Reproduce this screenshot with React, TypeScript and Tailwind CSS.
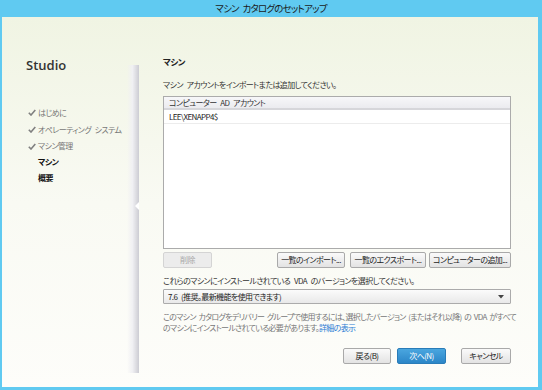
import React from "react";

const jp = "font-['Noto_Sans_CJK_JP','Noto_Sans',sans-serif] [font-feature-settings:'palt'] [word-spacing:2.5px]";

function Btn({ children, className = "", disabled = false }: { children: React.ReactNode; className?: string; disabled?: boolean }) {
  return (
    <div
      className={
        "flex items-center justify-center h-[16px] rounded-[2px] border text-[8px] tracking-[-0.6px] whitespace-nowrap leading-none " +
        (disabled
          ? "border-[#d4d4d4] bg-[#ececec] text-[#a8a8a8] "
          : "border-[#a9a9a9] bg-gradient-to-b from-[#fafafa] to-[#e3e3e3] text-[#222] ") +
        className
      }
    >
      {children}
    </div>
  );
}

function Check() {
  return (
    <svg width="8" height="7" viewBox="0 0 8 7" className="mr-[2px]">
      <path d="M0.8 3.8 L3 6 L7.3 1" fill="none" stroke="#808080" strokeWidth="1.6" />
    </svg>
  );
}

export default function App() {
  return (
    <div className={"w-[542px] h-[390px] bg-[#60caf1] flex flex-col " + jp}>
      <div className="h-[17px] flex items-center justify-center text-[9.5px] tracking-[-0.8px] text-[#1a1a1a] leading-none">
        マシン カタログのセットアップ
      </div>
      <div className="flex-1 ml-[2px] mr-[4px] mb-[3px] flex bg-gradient-to-b from-[#f0f4e3] via-[#f9faf3] to-[#fdfdfa]">
        {/* sidebar */}
        <div className="w-[137px] shrink-0 flex flex-col relative">
          <div className="mt-[40px] ml-[24px] h-[16px] flex items-center font-['Open_Sans',sans-serif] font-semibold text-[13px] text-[#333] leading-none">
            Studio
          </div>
          <div className="mt-[31px] flex flex-col text-[8px] tracking-[-0.6px] leading-none">
            <div className="h-[17px] flex items-center pl-[26px] text-[#777]"><Check />はじめに</div>
            <div className="h-[17px] flex items-center pl-[26px] text-[#777]"><Check />オペレーティング システム</div>
            <div className="h-[16px] flex items-center pl-[26px] text-[#777]"><Check />マシン管理</div>
            <div className="h-[16px] flex items-center pl-[36px] text-[#111] font-bold">マシン</div>
            <div className="h-[16px] flex items-center pl-[36px] text-[#111] font-bold">概要</div>
          </div>
          <div className="absolute right-0 top-[48px] bottom-[14px] w-[12px] bg-gradient-to-r from-transparent via-[#f0f0f3] to-[#d2d2d8] border-r border-[#cfcfd6]">
            <div className="absolute right-[-1px] top-[137px] w-0 h-0 border-y-[4px] border-y-transparent border-r-[4px] border-r-white" />
          </div>
        </div>
        {/* content */}
        <div className="flex-1 min-w-0 flex flex-col pl-[24px] pr-[27px] text-[8px] tracking-[-0.6px]">
          <div className="mt-[37px] h-[14px] flex items-center text-[8.5px] font-bold text-[#222] leading-none">マシン</div>
          <div className="mt-[10px] h-[13px] flex items-center text-[#333] leading-none whitespace-nowrap">
            マシン アカウントをインポートまたは追加してください。
          </div>
          <div className="mt-[5px] h-[153px] border border-[#ababab] bg-white flex flex-col">
            <div className="h-[13px] flex items-center pl-[5px] text-[#333] leading-none whitespace-nowrap bg-gradient-to-b from-[#f7f7f9] to-[#ebebef] border-b-[2px] border-[#d6d6da]">
              コンピューター AD アカウント
            </div>
            <div className="h-[14px] flex items-center pl-[5px] text-[#222] leading-none border-b border-[#ececec]">
              LEE\XENAPP4$
            </div>
          </div>
          <div className="mt-[3px] flex">
            <Btn disabled className="w-[49px]">削除</Btn>
            <Btn className="ml-auto w-[68px]">一覧のインポート...</Btn>
            <Btn className="ml-[5px] w-[76px]">一覧のエクスポート...</Btn>
            <Btn className="ml-[3px] w-[82px]">コンピューターの追加...</Btn>
          </div>
          <div className="mt-[6px] h-[13px] flex items-center text-[#333] leading-none whitespace-nowrap">
            これらのマシンにインストールされている VDA のバージョンを選択してください。
          </div>
          <div className="mt-[2px] h-[15px] border border-[#ababab] rounded-[1px] bg-gradient-to-b from-[#fbfbfb] to-[#e9e9e9] flex items-center pl-[4px] pr-[6px] text-[#222] leading-none">
            <span className="flex-1 whitespace-nowrap">7.6 (推奨。最新機能を使用できます)</span>
            <svg width="6" height="4" viewBox="0 0 6 4"><path d="M0 0 H6 L3 3.5 Z" fill="#444" /></svg>
          </div>
          <div className="mt-[7px] leading-[11px] text-[#777] whitespace-nowrap tracking-[-0.7px] [word-spacing:1.5px]">
            このマシン カタログをデリバリー グループで使用するには、選択したバージョン (またはそれ以降) の VDA がすべて
            <br />
            のマシンにインストールされている必要があります。<span className="text-[#2b7bd4]">詳細の表示</span>
          </div>
          <div className="mt-[15px] flex">
            <Btn className="ml-auto w-[48px]">戻る(B)</Btn>
            <div className="ml-[6px] w-[49px] h-[16px] rounded-[2px] border border-[#2a7cb8] bg-gradient-to-b from-[#4aa6df] to-[#2b86c8] flex items-center justify-center text-white leading-none">
              次へ(N)
            </div>
            <Btn className="ml-[15px] w-[50px]">キャンセル</Btn>
          </div>
        </div>
      </div>
    </div>
  );
}
